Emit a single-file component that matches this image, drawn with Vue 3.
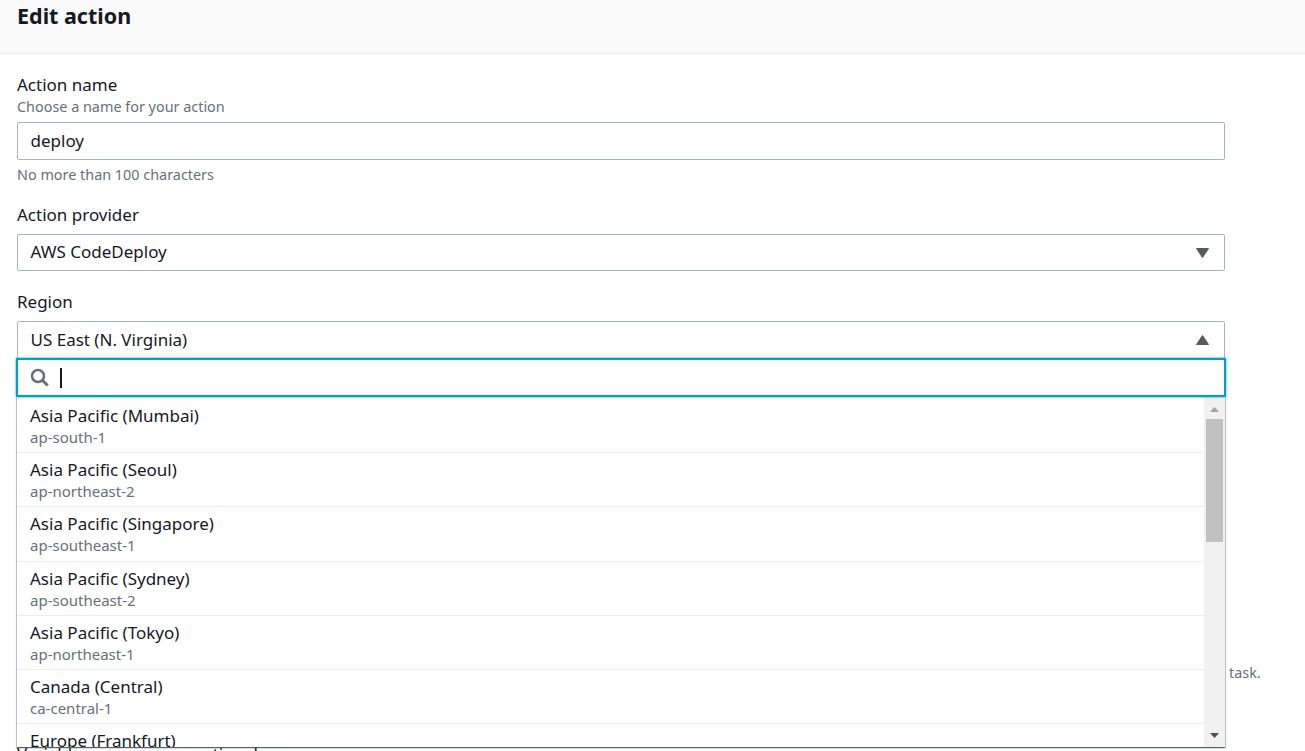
<template>
  <div class="page">
    <header class="page-header">
      <h1 class="page-title">Edit action</h1>
    </header>
    <form class="form" @submit.prevent>
      <div class="field field-name">
        <label class="field-label">Action name</label>
        <p class="field-desc">Choose a name for your action</p>
        <div class="control">deploy</div>
        <p class="field-hint">No more than 100 characters</p>
      </div>
      <div class="field field-provider">
        <label class="field-label">Action provider</label>
        <div class="control control-select">
          <span>AWS CodeDeploy</span>
          <svg class="caret" width="13" height="10" viewBox="0 0 13 10"><path d="M0.5 0.5h12L6.5 9.5z" fill="#545b64" stroke="#545b64" stroke-linejoin="round" /></svg>
        </div>
      </div>
      <div class="field field-region">
        <label class="field-label">Region</label>
        <div class="region-wrap">
          <div class="control control-select control-open">
            <span>US East (N. Virginia)</span>
            <svg class="caret" width="13" height="10" viewBox="0 0 13 10"><path d="M0.5 9.5h12L6.5 0.5z" fill="#545b64" stroke="#545b64" stroke-linejoin="round" /></svg>
          </div>
          <div class="dropdown">
            <div class="search">
              <svg class="search-icon" width="19" height="19" viewBox="0 0 19 19" fill="none" stroke="#687078">
                <circle cx="8" cy="8" r="6" stroke-width="2.5" />
                <path d="M12.5 12.5l5.2 5" stroke-width="3" />
              </svg>
              <span class="cursor"></span>
            </div>
            <div class="list-wrap">
              <ul class="list">
                <li v-for="r in regions" :key="r.code" class="option">
                  <div class="option-name">{{ r.name }}</div>
                  <div class="option-code">{{ r.code }}</div>
                </li>
              </ul>
              <div class="scrollbar">
                <svg class="arrow-up" width="9" height="5" viewBox="0 0 9 5"><path d="M0 5h9L4.5 0z" fill="#a3a3a3" /></svg>
                <div class="thumb"></div>
                <svg class="arrow-down" width="9" height="5" viewBox="0 0 9 5"><path d="M0 0h9L4.5 5z" fill="#505050" /></svg>
              </div>
            </div>
          </div>
        </div>
      </div>
      <p class="behind-note">task.</p>
      <p class="behind-label">Variable namespace - optional</p>
    </form>
  </div>
</template>

<script setup>
const regions = [
  { name: 'Asia Pacific (Mumbai)', code: 'ap-south-1' },
  { name: 'Asia Pacific (Seoul)', code: 'ap-northeast-2' },
  { name: 'Asia Pacific (Singapore)', code: 'ap-southeast-1' },
  { name: 'Asia Pacific (Sydney)', code: 'ap-southeast-2' },
  { name: 'Asia Pacific (Tokyo)', code: 'ap-northeast-1' },
  { name: 'Canada (Central)', code: 'ca-central-1' },
  { name: 'Europe (Frankfurt)', code: 'eu-central-1' }
];
</script>

<style>
html, body {
  margin: 0;
  background: #fff;
  overflow: hidden;
}
</style>

<style scoped>
.page {
  height: 751px;
  overflow: hidden;
  font-family: "Noto Sans", "Open Sans", sans-serif;
  color: #16191f;
  font-size: 17px;
}
.page-header {
  height: 54px;
  box-sizing: border-box;
  background: #fafafa;
  border-bottom: 1px solid #eaeded;
  padding-left: 17px;
}
.page-title {
  margin: 0;
  font-size: 21.5px;
  line-height: 32px;
  font-weight: 700;
}
.form {
  position: relative;
  width: 1208px;
  padding: 20px 0 0 17px;
}
.field-label {
  display: block;
  font-size: 17px;
  line-height: 22px;
}
.field-desc,
.field-hint {
  margin: 0;
  font-size: 14.4px;
  line-height: 20px;
  color: #687078;
}
.field-desc {
  margin-top: 1px;
  margin-bottom: 5px;
}
.field-hint {
  margin-top: 5px;
}
.field-provider {
  margin-top: 19px;
}
.field-region {
  margin-top: 20px;
}
.field-provider .control {
  margin-top: 8px;
}
.control {
  box-sizing: border-box;
  height: 38px;
  border: 1px solid #aab7b8;
  border-radius: 2px;
  padding: 0 15px 2px 12.5px;
  display: flex;
  align-items: center;
  background: #fff;
}
.control-select {
  justify-content: space-between;
  height: 37px;
}
.region-wrap {
  position: relative;
  margin-top: 8px;
}
.control-open {
  height: 38px;
}
.caret {
  flex: none;
  margin-top: 2px;
}
.dropdown {
  position: absolute;
  left: 0;
  right: -1px;
  top: 37px;
  height: 389px;
  background: #fff;
  display: flex;
  flex-direction: column;
  z-index: 2;
}
.search {
  box-sizing: border-box;
  height: 39px;
  flex: none;
  margin-left: -1px;
  border: 2px solid #00a1c9;
  box-shadow: 0 0 2px #00a1c9;
  display: flex;
  align-items: center;
  padding-left: 12px;
  position: relative;
  z-index: 1;
  background: #fff;
}
.search-icon {
  flex: none;
}
.cursor {
  width: 2px;
  height: 20px;
  background: #16191f;
  margin-left: 11px;
}
.list-wrap {
  flex: 1;
  min-height: 0;
  display: flex;
  margin-right: 1px;
  background: #fff;
  box-shadow: 0 1px 1px 0 rgba(0, 28, 36, 0.5), 1px 1px 1px 0 rgba(0, 28, 36, 0.2), -1px 1px 1px 0 rgba(0, 28, 36, 0.2);
}
.list {
  flex: 1;
  margin: 0;
  padding: 2px 0 0;
  list-style: none;
  overflow: hidden;
}
.option {
  box-sizing: border-box;
  height: 54.2px;
  padding: 6px 13px 0;
  border-bottom: 1px solid #eaeded;
}
.option-name {
  font-size: 17px;
  line-height: 22px;
}
.option-code {
  font-size: 15px;
  line-height: 20px;
  color: #687078;
}
.scrollbar {
  flex: none;
  width: 21px;
  background: #f1f1f1;
  position: relative;
}
.thumb {
  position: absolute;
  left: 2px;
  right: 2px;
  top: 22px;
  height: 123px;
  background: #c1c1c1;
}
.arrow-up,
.arrow-down {
  position: absolute;
  left: 6px;
}
.arrow-up {
  top: 10px;
}
.arrow-down {
  bottom: 9px;
}
.behind-note {
  position: absolute;
  left: 1229px;
  top: 609px;
  margin: 0;
  font-size: 14.4px;
  line-height: 20px;
  color: #687078;
}
.behind-label {
  position: absolute;
  left: 17px;
  top: 689px;
  margin: 0;
  font-size: 17px;
  line-height: 22px;
}
</style>
